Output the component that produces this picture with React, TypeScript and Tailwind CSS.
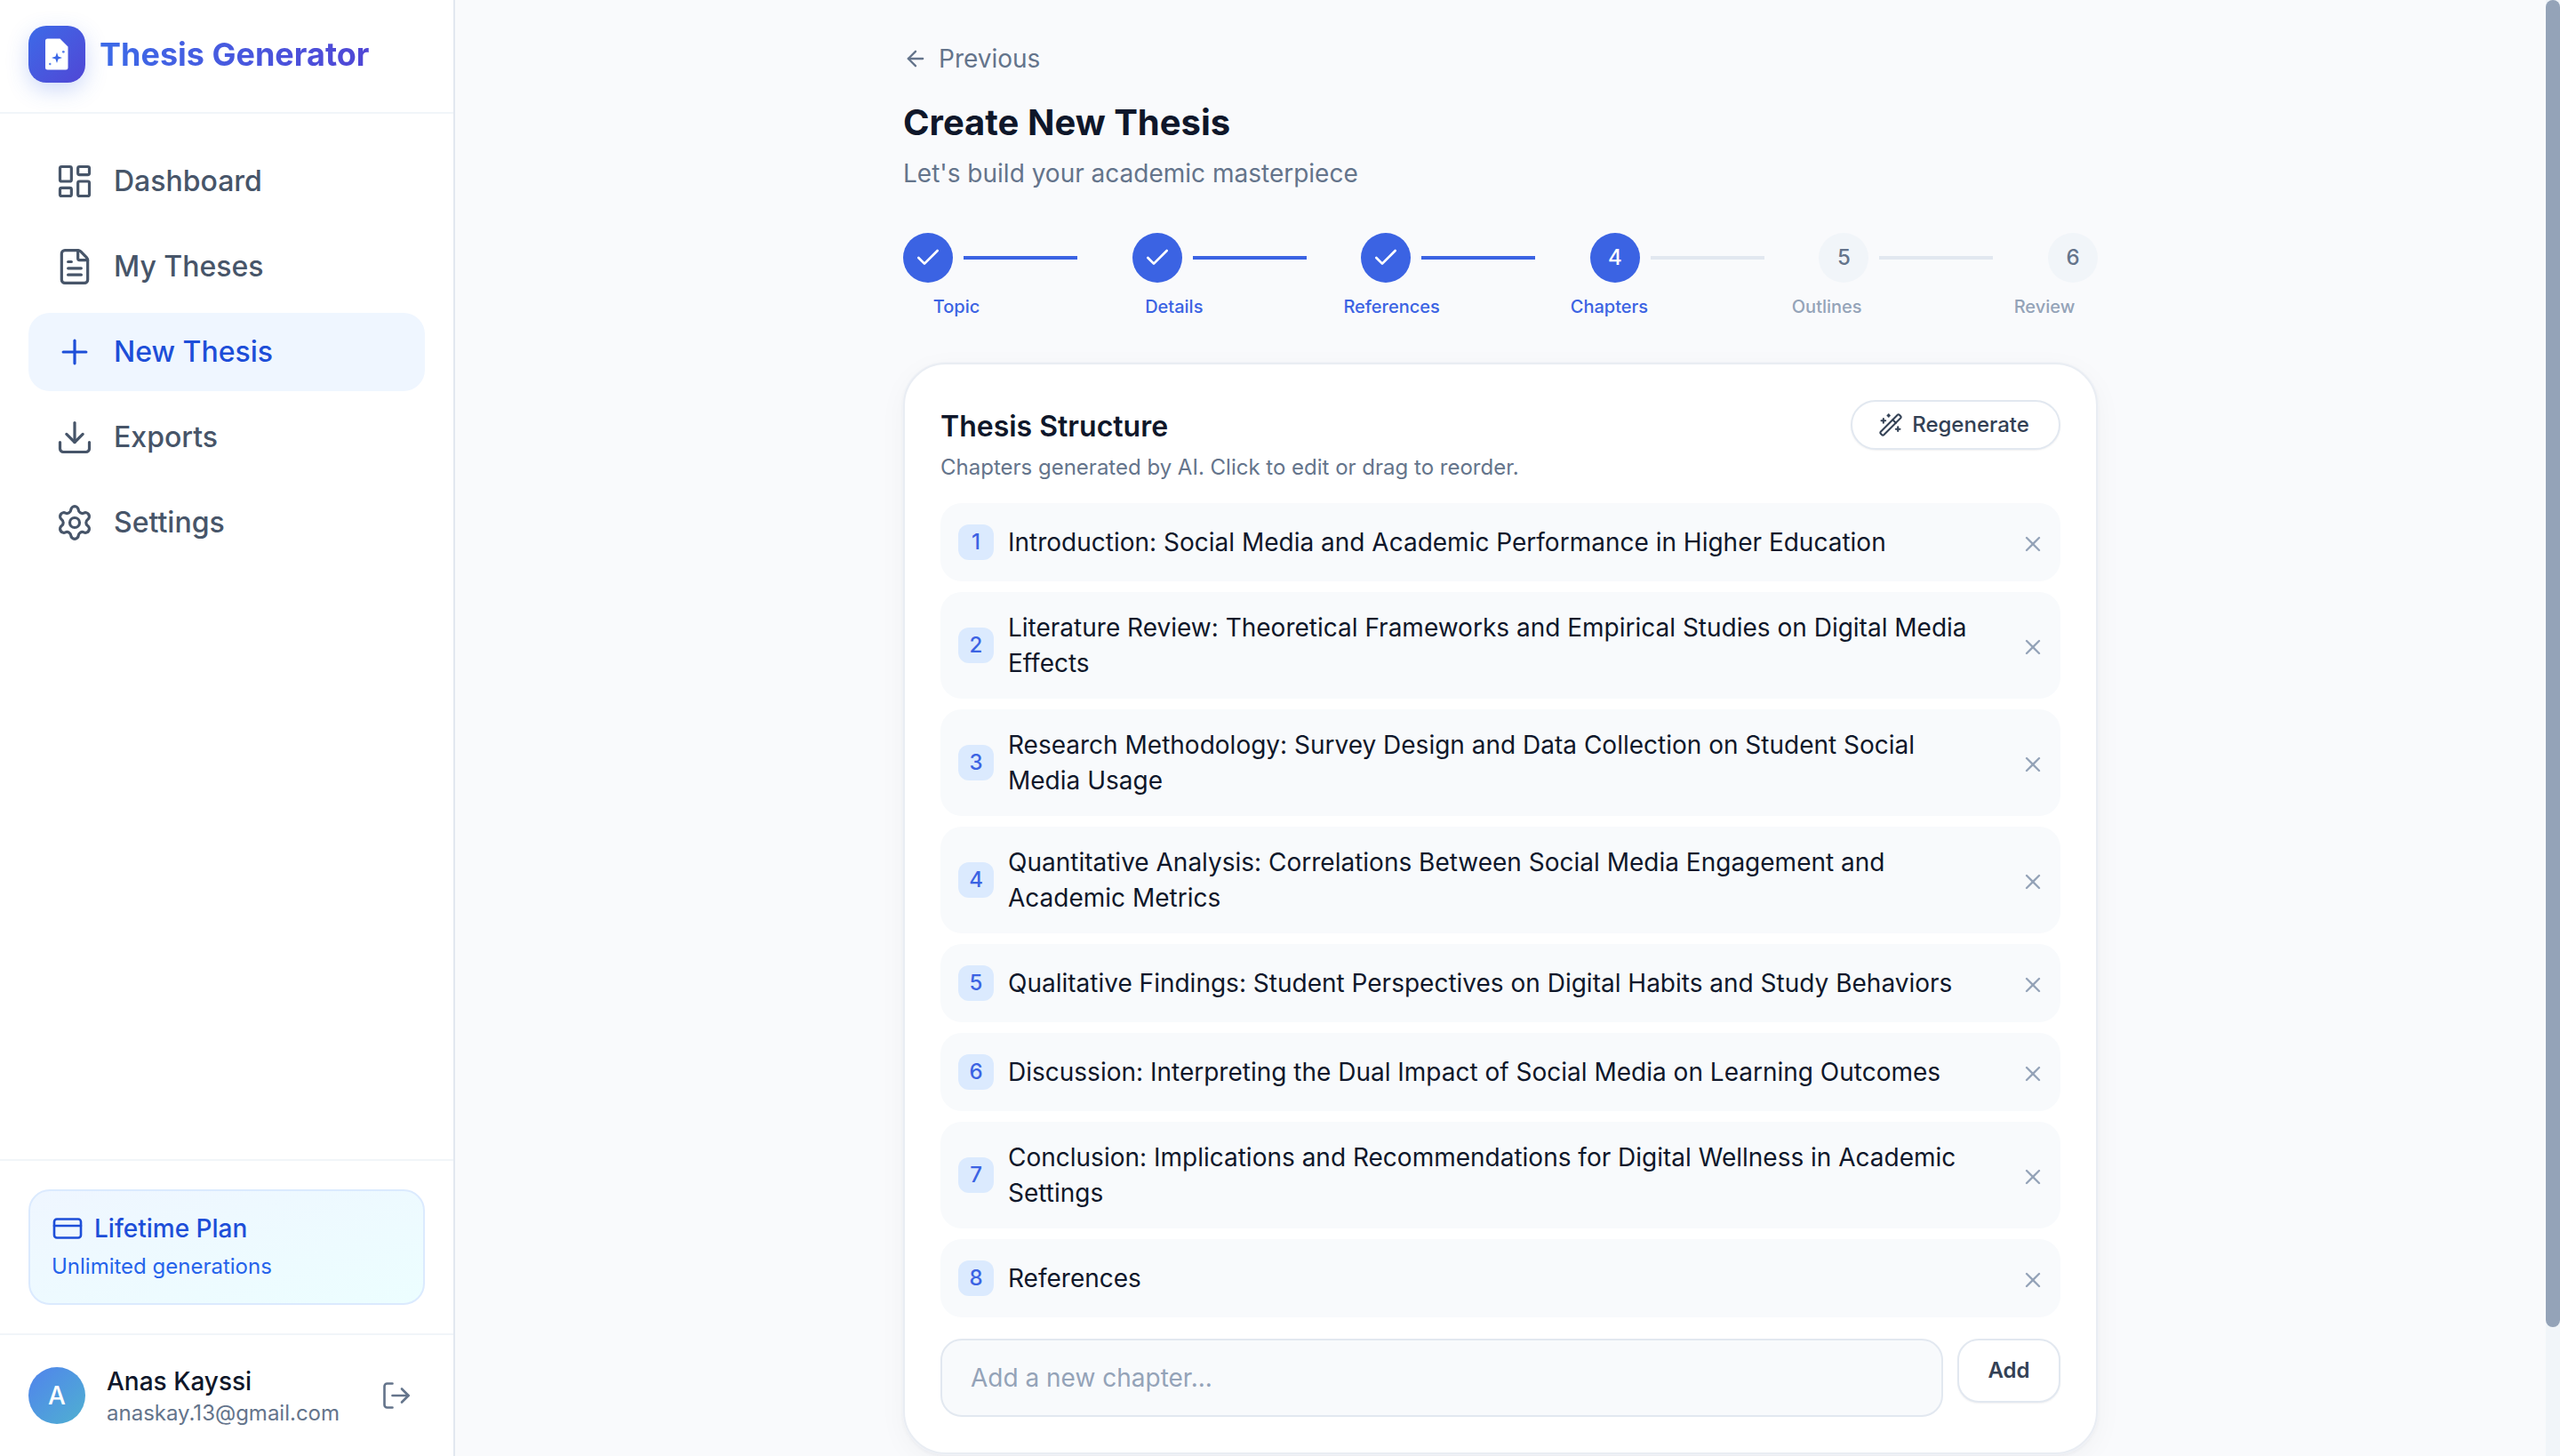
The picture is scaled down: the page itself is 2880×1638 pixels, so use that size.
import { ArrowLeft, Check, CreditCard, Download, FileText, LayoutDashboard, LogOut, Plus, Settings, Wand2, X } from 'lucide-react'

const navItems = [
  { label: 'Dashboard', icon: LayoutDashboard },
  { label: 'My Theses', icon: FileText },
  { label: 'New Thesis', icon: Plus, active: true },
  { label: 'Exports', icon: Download },
  { label: 'Settings', icon: Settings }
]

const steps = [
  { n: 1, label: 'Topic', state: 'done' },
  { n: 2, label: 'Details', state: 'done' },
  { n: 3, label: 'References', state: 'done' },
  { n: 4, label: 'Chapters', state: 'current' },
  { n: 5, label: 'Outlines', state: 'todo' },
  { n: 6, label: 'Review', state: 'todo' }
]

const chapters = [
  'Introduction: Social Media and Academic Performance in Higher Education',
  'Literature Review: Theoretical Frameworks and Empirical Studies on Digital Media Effects',
  'Research Methodology: Survey Design and Data Collection on Student Social Media Usage',
  'Quantitative Analysis: Correlations Between Social Media Engagement and Academic Metrics',
  'Qualitative Findings: Student Perspectives on Digital Habits and Study Behaviors',
  'Discussion: Interpreting the Dual Impact of Social Media on Learning Outcomes',
  'Conclusion: Implications and Recommendations for Digital Wellness in Academic Settings',
  'References'
]

const LogoMark = () => (
  <svg width="26" height="36" viewBox="0 0 26 36">
    <path d="M2.5 0.5h14l9 9v23.5a2.5 2.5 0 0 1-2.5 2.5H2.5a2.5 2.5 0 0 1-2.5-2.5V3a2.5 2.5 0 0 1 2.5-2.5z" fill="#ffffff" />
    <path d="M13 16l1.5 4.5L19 22l-4.5 1.5L13 28l-1.5-4.5L7 22l4.5-1.5z" fill="#3b66e6" />
    <circle cx="20.3" cy="15.3" r="1.4" fill="#5b82ec" />
    <circle cx="5.3" cy="29" r="1.2" fill="#5b82ec" />
  </svg>
)

function Sidebar() {
  return (
    <aside className="flex h-full w-[512px] shrink-0 flex-col border-r-2 border-[#e2e8f0] bg-white">
      <div className="flex h-[128px] items-center gap-4 border-b-2 border-[#f1f5f9] px-8 pb-1">
        <div className="flex h-16 w-16 items-center justify-center rounded-[20px] bg-gradient-to-br from-[#3b6ae8] to-[#4f46d5] shadow-[0_8px_24px_rgba(59,106,232,0.25)]">
          <LogoMark />
        </div>
        <span className="bg-gradient-to-r from-[#3b6ae8] to-[#4f46d5] bg-clip-text text-[36px] font-bold text-transparent">
          Thesis Generator
        </span>
      </div>

      <nav className="flex flex-1 flex-col gap-2 px-8 pt-8">
        {navItems.map((item) => {
          const Icon = item.icon
          return (
            <div
              key={item.label}
              className={
                item.active
                  ? 'flex h-[88px] items-center gap-[22px] rounded-3xl bg-[#eff6ff] pl-[30px] text-[32px] font-medium text-[#1d4ed8]'
                  : 'flex h-[88px] items-center gap-[22px] rounded-3xl pl-[30px] text-[32px] font-medium text-[#475569]'
              }
            >
              <Icon size={44} strokeWidth={1.75} />
              {item.label}
            </div>
          )
        })}
      </nav>

      <div className="border-t-2 border-[#f1f5f9] p-8">
        <div className="h-[130px] rounded-3xl border-2 border-[#dbeafe] bg-gradient-to-br from-[#eff6ff] to-[#ecfeff] px-[24px] pt-[22px]">
          <div className="flex items-center gap-3 text-[28px] leading-10 font-medium text-[#1d4ed8]">
            <CreditCard size={36} strokeWidth={1.75} />
            Lifetime Plan
          </div>
          <div className="mt-[7px] text-[24px] leading-8 text-[#2563eb]">Unlimited generations</div>
        </div>
      </div>

      <div className="flex h-[138px] items-center border-t-2 border-[#f1f5f9] px-8">
        <div className="flex h-16 w-16 shrink-0 items-center justify-center rounded-full bg-gradient-to-br from-[#5182ec] to-[#50b0d0] text-[28px] font-medium text-white">
          A
        </div>
        <div className="ml-6 min-w-0 flex-1">
          <div className="text-[28px] leading-10 font-medium text-[#0f172a]">Anas Kayssi</div>
          <div className="text-[24px] leading-8 text-[#64748b]">anaskay.13@gmail.com</div>
        </div>
        <LogOut size={36} className="mr-[14px] text-[#64748b]" strokeWidth={1.75} />
      </div>
    </aside>
  )
}

function Stepper() {
  return (
    <div className="mt-[47px]">
      <div className="flex items-center justify-between">
        {steps.map((s, i) => (
          <div key={s.n} className="flex items-center">
            <div
              className={
                s.state === 'todo'
                  ? 'flex h-14 w-14 items-center justify-center rounded-full bg-[#f1f5f9] text-[24px] font-medium text-[#64748b]'
                  : 'flex h-14 w-14 items-center justify-center rounded-full bg-[#3b63e3] text-[24px] font-medium text-white'
              }
            >
              {s.state === 'done' ? <Check size={32} strokeWidth={2} /> : s.n}
            </div>
            {i < steps.length - 1 && (
              <div className={s.state === 'done' ? 'ml-3 h-1 w-32 bg-[#3b63e3]' : 'ml-3 h-1 w-32 bg-[#e2e8f0]'} />
            )}
          </div>
        ))}
      </div>
      <div className="mt-[11px] flex justify-between">
        {steps.map((s) => (
          <div
            key={s.n}
            className={
              s.state === 'todo'
                ? 'w-[120px] text-center text-[20px] leading-8 font-medium text-[#94a3b8]'
                : 'w-[120px] text-center text-[20px] leading-8 font-medium text-[#3b63e3]'
            }
          >
            {s.label}
          </div>
        ))}
      </div>
    </div>
  )
}

function ChapterRow({ n, title }: { n: number; title: string }) {
  return (
    <div className="flex items-center rounded-3xl bg-[#f8fafc] py-5 pr-[17px] pl-[20px]">
      <div className="flex h-10 w-10 shrink-0 items-center justify-center rounded-xl bg-[#dbeafe] text-[24px] font-medium text-[#3b63e3]">
        {n}
      </div>
      <div className="ml-4 min-h-12 flex-1 content-center pr-12 text-[28px] leading-10 text-[#0f172a]">{title}</div>
      <X size={28} className="mt-1 shrink-0 text-[#94a3b8]" />
    </div>
  )
}

export default function App() {
  return (
    <div className="relative flex h-screen overflow-hidden bg-[#f9fafc] font-['Inter',sans-serif]">
      <Sidebar />

      <main className="min-w-0 flex-1 overflow-hidden pr-4">
        <div className="mx-auto w-[1344px] pt-12">
          <div className="flex h-9 items-center gap-3 text-[28px] text-[#64748b]">
            <ArrowLeft size={28} />
            Previous
          </div>
          <h1 className="mt-[26px] text-[40px] leading-[56px] font-bold text-[#0f172a]">Create New Thesis</h1>
          <p className="mt-[9px] text-[28px] leading-10 text-[#64748b]">Let's build your academic masterpiece</p>

          <Stepper />

          <section className="mt-[47px] rounded-[48px] border-2 border-[#e9edf3] bg-white p-10 shadow-[0_0_0_1px_#f1f3f7,0_2px_4px_rgba(15,23,42,0.05),0_8px_32px_rgba(15,23,42,0.04)]">
            <div className="flex items-start justify-between">
              <div>
                <h2 className="mt-[2px] text-[32px] leading-[56px] font-semibold text-[#0f172a]">Thesis Structure</h2>
                <p className="mt-[-2px] text-[24px] leading-10 text-[#64748b]">Chapters generated by AI. Click to edit or drag to reorder.</p>
              </div>
              <button className="flex h-[56px] w-[236px] items-center justify-center gap-[10px] rounded-[28px] border-2 border-[#e2e8f0] bg-white pr-[4px] text-[24px] font-medium text-[#334155] shadow-[0_1px_2px_rgba(15,23,42,0.06)]">
                <Wand2 size={28} strokeWidth={1.75} />
                Regenerate
              </button>
            </div>

            <div className="mt-5 flex flex-col gap-3">
              {chapters.map((title, i) => (
                <ChapterRow key={title} n={i + 1} title={title} />
              ))}
            </div>

            <div className="mt-6 flex items-start gap-4">
              <div className="flex h-[88px] flex-1 items-center rounded-3xl border-2 border-[#e2e8f0] bg-[#f8fafc] px-[32px] text-[28px] text-[#94a3b8]">
                Add a new chapter...
              </div>
              <button className="h-[72px] w-[116px] rounded-3xl border-2 border-[#e2e8f0] bg-white text-[24px] font-semibold text-[#334155] shadow-[0_1px_2px_rgba(15,23,42,0.06)]">
                Add
              </button>
            </div>
          </section>
        </div>
      </main>

      <div className="absolute top-0 right-0 h-full w-4 bg-[#f1f5f9]">
        <div className="h-[1493px] w-4 rounded-full bg-[#94a3b8]" />
      </div>
    </div>
  )
}
